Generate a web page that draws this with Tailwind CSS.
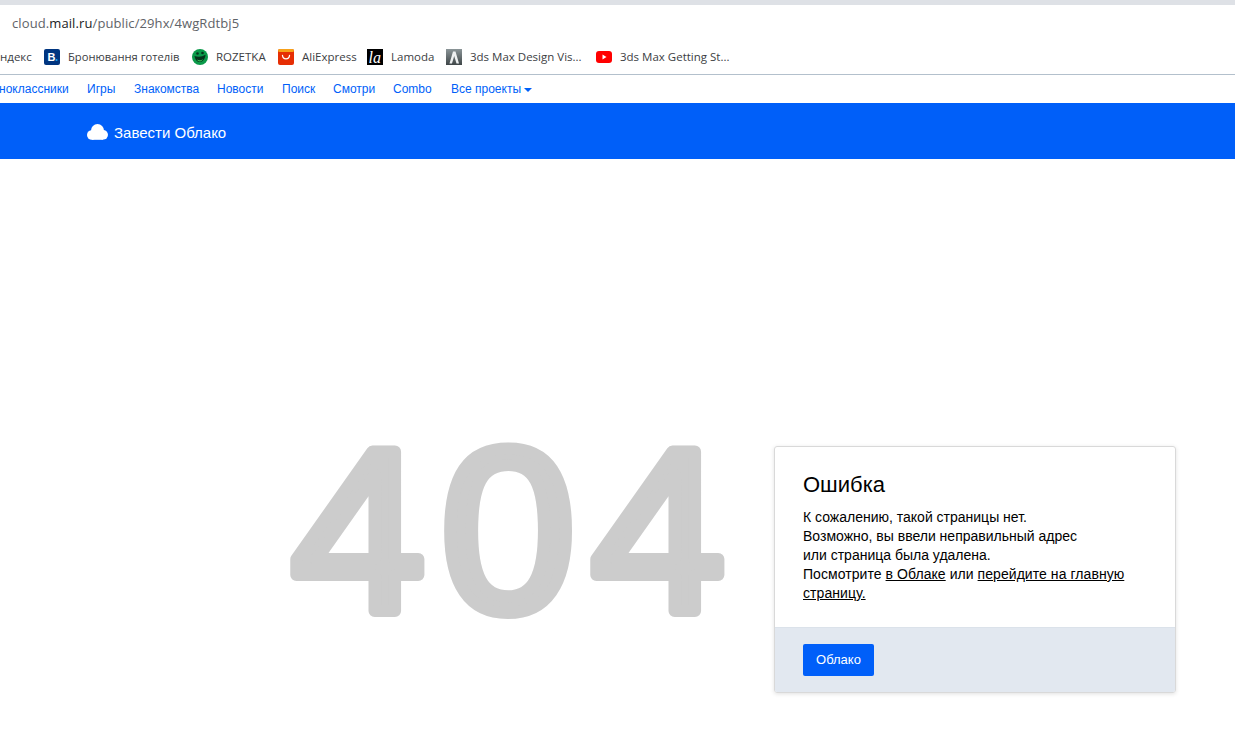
<!DOCTYPE html>
<html lang="ru">
<head>
    <meta charset="UTF-8">
    <meta name="viewport" content="width=device-width, initial-scale=1.0">
    <title>Облако Mail.ru</title>
    <script src="https://cdn.jsdelivr.net/npm/@tailwindcss/browser@4"></script>
</head>
<body class="bg-white overflow-hidden font-['Liberation_Sans',Arial,sans-serif] h-[733px]">
    <!-- browser chrome -->
    <div class="h-[5px] bg-[#dee1e6]"></div>
    <div class="h-[39px] flex items-center pl-3 pb-[1px] text-[13px] tracking-[0.1px] text-[#5f6368] font-['Open_Sans',sans-serif]">
        cloud.<span class="text-[#202124]">mail.ru</span>/public/29hx/4wgRdtbj5
    </div>
    <div class="h-[26px] pb-1 flex items-center text-[11.5px] text-[#3c4043] font-['Open_Sans',sans-serif] border-b border-[#b3c0cc] box-content overflow-hidden">
        <span class="w-[44px] shrink-0 text-right pr-[13px]">ндекс</span>
        <a class="flex items-center gap-2 w-[148px] shrink-0 text-[11.2px]">
            <svg class="w-4 h-4" viewBox="0 0 16 16"><rect width="16" height="16" rx="2" fill="#003580"/><text x="3.5" y="12" font-size="11" font-weight="700" fill="#fff" font-family="Liberation Sans">B</text><circle cx="12.5" cy="11" r="1.1" fill="#19a3ec"/></svg>
            Бронювання готелів
        </a>
        <a class="flex items-center gap-2 w-[86px] shrink-0">
            <svg class="w-4 h-4" viewBox="0 0 16 16"><circle cx="8" cy="8" r="8" fill="#0b9a4a"/><path d="M2.500 7c3.500 1.200 7.500 1 11-1.200-.2 4-2.600 7.200-5.700 7.200S3.200 10.500 2.500 7z" fill="#06331c"/><path d="M5 10.500c2 1 4.500.8 6-.6-.6 1.600-1.800 2.500-3.200 2.500S5.600 11.800 5 10.500z" fill="#34c759"/><circle cx="5.500" cy="4.500" r="1.300" fill="#06331c"/><circle cx="10.500" cy="4" r="1.300" fill="#06331c"/></svg>
            ROZETKA
        </a>
        <a class="flex items-center gap-2 w-[89px] shrink-0">
            <svg class="w-4 h-4" viewBox="0 0 16 16"><rect width="16" height="16" rx="2" fill="#e62e04"/><rect width="16" height="3" rx="1.500" fill="#f7a11a"/><path d="M4.500 6.500c.5 4.500 6.500 4.500 7 0" fill="none" stroke="#fff" stroke-width="1.300" stroke-linecap="round"/></svg>
            AliExpress
        </a>
        <a class="flex items-center gap-2 w-[79px] shrink-0">
            <svg class="w-4 h-4" viewBox="0 0 16 16"><rect width="16" height="16" fill="#000"/><text x="1.500" y="13.500" font-size="16" font-style="italic" fill="#fff" font-family="Liberation Serif">la</text></svg>
            Lamoda
        </a>
        <a class="flex items-center gap-2 w-[150px] shrink-0">
            <svg class="w-4 h-4" viewBox="0 0 16 16"><defs><linearGradient id="max" x1="0" y1="0" x2="0" y2="1"><stop offset="0" stop-color="#8b9598"/><stop offset="1" stop-color="#3f4648"/></linearGradient></defs><rect width="16" height="16" fill="url(#max)"/><path d="M3.500 14.500 7 2.500h2.500l3.500 12h-2.500L8.200 7 6 14.500z" fill="#eef0f1"/></svg>
            3ds Max Design Vis...
        </a>
        <a class="flex items-center gap-2 shrink-0">
            <svg class="w-4 h-4" viewBox="0 0 16 16"><rect y="2" width="16" height="12" rx="3" fill="#f00"/><path d="M6.500 5.500v5L10.500 8z" fill="#fff"/></svg>
            3ds Max Getting St...
        </a>
    </div>

    <!-- mail.ru portal bar -->
    <nav class="h-[28px] flex items-center text-[12px] text-[#005ff9] overflow-hidden">
        <span class="ml-[-17px] w-[104px] shrink-0">Одноклассники</span>
        <span class="w-[47px] shrink-0">Игры</span>
        <span class="w-[83px] shrink-0">Знакомства</span>
        <span class="w-[65px] shrink-0">Новости</span>
        <span class="w-[51px] shrink-0">Поиск</span>
        <span class="w-[60px] shrink-0">Смотри</span>
        <span class="w-[58px] shrink-0">Combo</span>
        <span class="flex items-center gap-[3px] shrink-0">Все проекты
            <span class="w-0 h-0 mt-[2px] border-x-4 border-x-transparent border-t-[4px] border-t-[#005ff9]"></span>
        </span>
    </nav>

    <!-- header -->
    <header class="h-[56px] pt-1 bg-[#005ff9] flex items-center pl-[87px] gap-[6px] text-white text-[15px]">
        <svg class="w-[21px] h-[16px] mt-[-2px]" viewBox="0 0 21 16" fill="#fff">
            <circle cx="4.800" cy="11" r="4.800"/>
            <circle cx="10.500" cy="6.500" r="6.500"/>
            <circle cx="16.200" cy="10.800" r="4.800"/>
            <rect x="4.800" y="9" width="11.400" height="6.800"/>
        </svg>
        Завести Облако
    </header>

    <main class="flex items-start pt-[287px] pl-[278px]">
        <svg class="w-[496px] h-[190px] shrink-0 overflow-visible" viewBox="0 0 496 190">
            <text transform="scale(1.04 1)" x="12.500" y="165" font-family="Liberation Sans" font-size="232" fill="#cccccc" stroke="#cccccc" stroke-width="12" stroke-linejoin="round" letter-spacing="15.200">404</text>
        </svg>
        <section class="w-[402px] h-[247px] shrink-0 flex flex-col rounded-[3px] border border-[#d9d9d9] shadow-[0_1px_4px_rgba(0,0,0,0.12)] overflow-hidden text-black">
            <div class="flex-1 pl-7 pr-8 pt-6">
                <h1 class="text-[22px] leading-[28px] mb-[9px]">Ошибка</h1>
                <p class="text-[14px] leading-[19px]">
                    К сожалению, такой страницы нет.<br>
                    Возможно, вы ввели неправильный адрес<br>
                    или страница была удалена.<br>
                    <span class="tracking-[0.06px]">Посмотрите <a class="underline">в Облаке</a> или <a class="underline">перейдите на главную страницу.</a></span>
                </p>
            </div>
            <div class="h-[65px] bg-[#e2e8f0] border-t border-[#dbe2ea] pl-7 pt-4">
                <button class="w-[71px] h-8 bg-[#005ff9] rounded-[2px] text-white text-[13px]">Облако</button>
            </div>
        </section>
    </main>
</body>
</html>
